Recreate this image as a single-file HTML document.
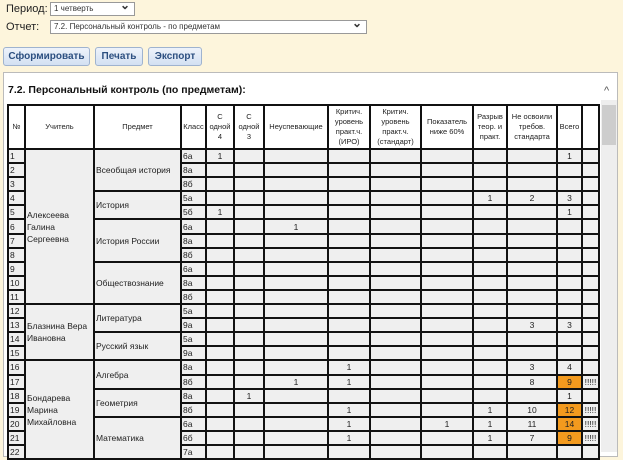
<!DOCTYPE html>
<html><head><meta charset="utf-8"><style>
body{margin:0;width:623px;height:452px;overflow:hidden;background:#fdf5dc;font-family:"Liberation Sans",sans-serif;position:relative}
.lbl{position:absolute;font-size:11px;color:#222}
.sel{position:absolute;background:#fff;border:1px solid #999;font-size:8px;color:#333;padding-left:3px;box-sizing:border-box;line-height:12px}
.sel:after{content:"⌄";position:absolute;right:4px;top:-4px;font-size:12px;font-weight:bold}
.btn{position:absolute;top:47px;height:19px;border:1px solid #9fb3cf;border-radius:3px;background:linear-gradient(#eef3fb,#d3e0f2);font-size:10px;font-weight:bold;color:#2c4f80;text-align:center;line-height:18px;box-sizing:border-box}
.panel{position:absolute;left:3px;top:72px;width:615px;height:385px;background:#fff;border:1px solid #bbb;box-sizing:border-box}
.title{position:absolute;left:8px;top:84px;font-size:10.5px;font-weight:bold;color:#111}
table{position:absolute;left:7px;top:104px;border-collapse:collapse;table-layout:fixed;font-size:8.5px;color:#222}
td,th{border:2px solid #111;padding:0 1px;overflow:hidden;white-space:nowrap}
th{background:#fff;font-weight:normal;height:42px;line-height:10px;white-space:normal;text-align:center;font-size:7.5px}
td{background:#efefef;height:12.1px;line-height:12px;text-align:center}
td.l{text-align:left;white-space:normal;line-height:12px}
td.o{background:#f39a1e}
.sb{position:absolute;left:601px;top:100px;width:16px;height:352px;background:#eee}
.th{position:absolute;left:602px;top:105px;width:14px;height:40px;background:#cdcdcd}
</style></head><body>
<div class="lbl" style="left:6px;top:3px">Период:</div>
<div class="sel" style="left:50px;top:2px;width:85px;height:14px">1 четверть</div>
<div class="lbl" style="left:6px;top:21px">Отчет:</div>
<div class="sel" style="left:50px;top:20px;width:317px;height:14px">7.2. Персональный контроль - по предметам</div>
<div class="btn" style="left:3px;width:87px">Сформировать</div>
<div class="btn" style="left:95px;width:48px">Печать</div>
<div class="btn" style="left:148px;width:54px">Экспорт</div>
<div class="panel"></div>
<div class="title">7.2. Персональный контроль (по предметам):</div>
<div class="sb"></div><div class="th"></div>
<div style="position:absolute;left:604px;top:85px;font-size:11px;color:#555">^</div>
<table>
<colgroup><col style="width:17px"><col style="width:69px"><col style="width:87px"><col style="width:25px"><col style="width:28px"><col style="width:30px"><col style="width:64px"><col style="width:42px"><col style="width:51px"><col style="width:52px"><col style="width:34px"><col style="width:50px"><col style="width:25px"><col style="width:17px"></colgroup>
<tr><th>№</th><th>Учитель</th><th>Предмет</th><th>Класс</th><th>С одной 4</th><th>С одной 3</th><th>Неуспевающие</th><th>Критич. уровень практ.ч. (ИРО)</th><th>Критич. уровень практ.ч. (стандарт)</th><th>Показатель ниже 60%</th><th>Разрыв теор. и практ.</th><th>Не освоили требов. стандарта</th><th>Всего</th><th></th></tr>
<tr><td class="l">1</td><td class="l" rowspan="11">Алексеева Галина Сергеевна</td><td class="l" rowspan="3">Всеобщая история</td><td class="l">6а</td><td>1</td><td></td><td></td><td></td><td></td><td></td><td></td><td></td><td>1</td><td></td></tr>
<tr><td class="l">2</td><td class="l">8а</td><td></td><td></td><td></td><td></td><td></td><td></td><td></td><td></td><td></td><td></td></tr>
<tr><td class="l">3</td><td class="l">8б</td><td></td><td></td><td></td><td></td><td></td><td></td><td></td><td></td><td></td><td></td></tr>
<tr><td class="l">4</td><td class="l" rowspan="2">История</td><td class="l">5а</td><td></td><td></td><td></td><td></td><td></td><td></td><td>1</td><td>2</td><td>3</td><td></td></tr>
<tr><td class="l">5</td><td class="l">5б</td><td>1</td><td></td><td></td><td></td><td></td><td></td><td></td><td></td><td>1</td><td></td></tr>
<tr><td class="l">6</td><td class="l" rowspan="3">История России</td><td class="l">6а</td><td></td><td></td><td>1</td><td></td><td></td><td></td><td></td><td></td><td></td><td></td></tr>
<tr><td class="l">7</td><td class="l">8а</td><td></td><td></td><td></td><td></td><td></td><td></td><td></td><td></td><td></td><td></td></tr>
<tr><td class="l">8</td><td class="l">8б</td><td></td><td></td><td></td><td></td><td></td><td></td><td></td><td></td><td></td><td></td></tr>
<tr><td class="l">9</td><td class="l" rowspan="3">Обществознание</td><td class="l">6а</td><td></td><td></td><td></td><td></td><td></td><td></td><td></td><td></td><td></td><td></td></tr>
<tr><td class="l">10</td><td class="l">8а</td><td></td><td></td><td></td><td></td><td></td><td></td><td></td><td></td><td></td><td></td></tr>
<tr><td class="l">11</td><td class="l">8б</td><td></td><td></td><td></td><td></td><td></td><td></td><td></td><td></td><td></td><td></td></tr>
<tr><td class="l">12</td><td class="l" rowspan="4">Блазнина Вера Ивановна</td><td class="l" rowspan="2">Литература</td><td class="l">5а</td><td></td><td></td><td></td><td></td><td></td><td></td><td></td><td></td><td></td><td></td></tr>
<tr><td class="l">13</td><td class="l">9а</td><td></td><td></td><td></td><td></td><td></td><td></td><td></td><td>3</td><td>3</td><td></td></tr>
<tr><td class="l">14</td><td class="l" rowspan="2">Русский язык</td><td class="l">5а</td><td></td><td></td><td></td><td></td><td></td><td></td><td></td><td></td><td></td><td></td></tr>
<tr><td class="l">15</td><td class="l">9а</td><td></td><td></td><td></td><td></td><td></td><td></td><td></td><td></td><td></td><td></td></tr>
<tr><td class="l">16</td><td class="l" rowspan="7">Бондарева Марина Михайловна</td><td class="l" rowspan="2">Алгебра</td><td class="l">8а</td><td></td><td></td><td></td><td>1</td><td></td><td></td><td></td><td>3</td><td>4</td><td></td></tr>
<tr><td class="l">17</td><td class="l">8б</td><td></td><td></td><td>1</td><td>1</td><td></td><td></td><td></td><td>8</td><td class="o">9</td><td>!!!!!</td></tr>
<tr><td class="l">18</td><td class="l" rowspan="2">Геометрия</td><td class="l">8а</td><td></td><td>1</td><td></td><td></td><td></td><td></td><td></td><td></td><td>1</td><td></td></tr>
<tr><td class="l">19</td><td class="l">8б</td><td></td><td></td><td></td><td>1</td><td></td><td></td><td>1</td><td>10</td><td class="o">12</td><td>!!!!!</td></tr>
<tr><td class="l">20</td><td class="l" rowspan="3">Математика</td><td class="l">6а</td><td></td><td></td><td></td><td>1</td><td></td><td>1</td><td>1</td><td>11</td><td class="o">14</td><td>!!!!!</td></tr>
<tr><td class="l">21</td><td class="l">6б</td><td></td><td></td><td></td><td>1</td><td></td><td></td><td>1</td><td>7</td><td class="o">9</td><td>!!!!!</td></tr>
<tr><td class="l">22</td><td class="l">7а</td><td></td><td></td><td></td><td></td><td></td><td></td><td></td><td></td><td></td><td></td></tr>
</table>
</body></html>
